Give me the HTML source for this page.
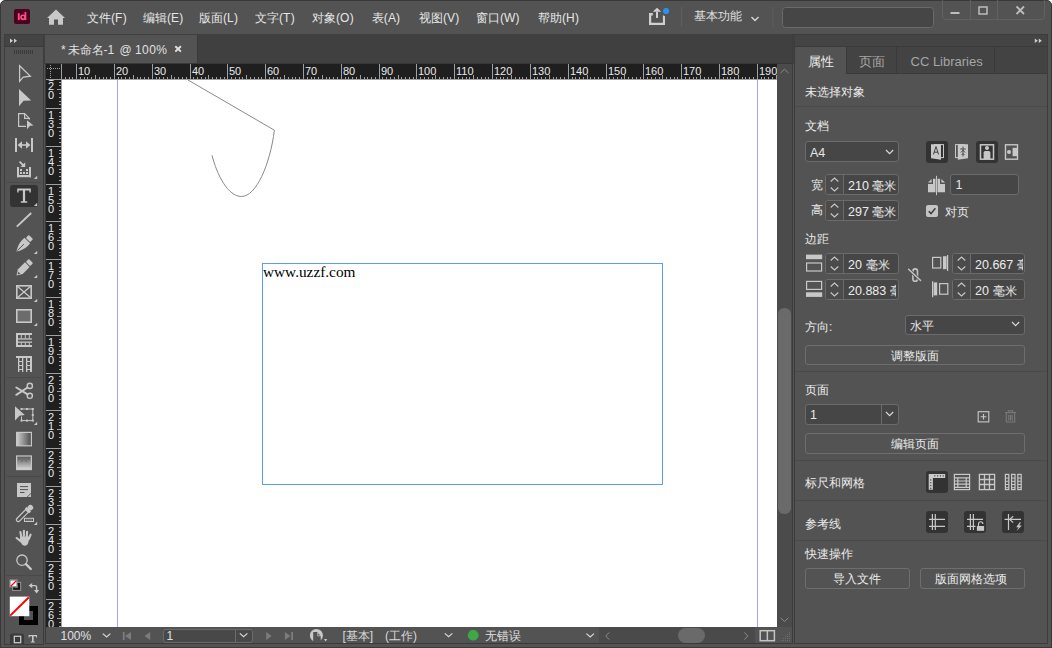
<!DOCTYPE html>
<html><head><meta charset="utf-8">
<style>
*{margin:0;padding:0;box-sizing:border-box}
html,body{width:1052px;height:648px;overflow:hidden;background:#ffffff}
body{position:relative;font-family:"Liberation Sans",sans-serif;font-size:12px;color:#dcdcdc}
.a{position:absolute}
.t{position:absolute;white-space:nowrap;line-height:1}
.rn{font-size:11px;color:#e8e8e8}
.rv{font-size:11px;color:#e8e8e8}
.fld{position:absolute;background:#464646;border:1px solid #6b6b6b;border-radius:3px}
.btn{position:absolute;border:1px solid #6e6e6e;border-radius:3px;text-align:center;line-height:18px;color:#ececec}
.sep{position:absolute;height:1px;background:#4a4a4a}
svg{overflow:visible}
</style></head>
<body>
<div class="a" style="left:0;top:0;width:1052px;height:648px;background:#535353;border:1px solid #383838;border-radius:5px 5px 0 0"></div>

<div class="a" style="left:14px;top:9px;width:16px;height:15px;background:#49021f;border-radius:2px"></div>
<svg class="a" style="left:0;top:0" width="40" height="30"><rect x="17.8" y="13.2" width="1.9" height="6.9" fill="#ff4d82"/><rect x="24.5" y="12.1" width="1.8" height="8" fill="#ff4d82"/><circle cx="23" cy="17.3" r="2.05" fill="none" stroke="#ff4d82" stroke-width="1.7"/></svg>
<svg class="a" style="left:0;top:0" width="80" height="34">
<path d="M56 9.6 L65 18 L63 18 L63 24.7 L58 24.7 L58 19.5 L54 19.5 L54 24.7 L49 24.7 L49 18 L47 18 Z" fill="#c8c8c8"/>
</svg>

<div class="t" style="left:86.5px;top:11.5px;font-size:12px;color:#e6e6e6;letter-spacing:0.2px">文件(F)</div>
<div class="t" style="left:142.5px;top:11.5px;font-size:12px;color:#e6e6e6;letter-spacing:0.2px">编辑(E)</div>
<div class="t" style="left:198.5px;top:11.5px;font-size:12px;color:#e6e6e6;letter-spacing:0.2px">版面(L)</div>
<div class="t" style="left:254.5px;top:11.5px;font-size:12px;color:#e6e6e6;letter-spacing:0.2px">文字(T)</div>
<div class="t" style="left:311.5px;top:11.5px;font-size:12px;color:#e6e6e6;letter-spacing:0.2px">对象(O)</div>
<div class="t" style="left:371.5px;top:11.5px;font-size:12px;color:#e6e6e6;letter-spacing:0.2px">表(A)</div>
<div class="t" style="left:418.5px;top:11.5px;font-size:12px;color:#e6e6e6;letter-spacing:0.2px">视图(V)</div>
<div class="t" style="left:475.5px;top:11.5px;font-size:12px;color:#e6e6e6;letter-spacing:0.2px">窗口(W)</div>
<div class="t" style="left:537.5px;top:11.5px;font-size:12px;color:#e6e6e6;letter-spacing:0.2px">帮助(H)</div>
<svg class="a" style="left:0;top:0" width="1052" height="34">
<path d="M649 13 H652.8 V15.4 H651.2 V22.8 H662.9 V15.2 L665 16.2 V25 H649 Z" fill="#d0d0d0"/>
<path d="M656 11.6 V17.9 H658 V11.6 Z M652.8 11.8 L657 7.8 L661.2 11.8 Z" fill="#d0d0d0"/>
<circle cx="666.1" cy="11" r="3.1" fill="#2f8ff0"/>
<rect x="681" y="7" width="1" height="20" fill="#5f5f5f"/>
<rect x="772.5" y="7" width="1" height="20" fill="#5f5f5f"/>
<path d="M751.5 17 L755 20.5 L758.5 17" fill="none" stroke="#d8d8d8" stroke-width="1.3"/>
<rect x="782.5" y="7.5" width="151" height="20" rx="3" fill="#464646" stroke="#6a6a6a"/>
<path d="M942.5 0 V16 Q942.5 19.5 946 19.5 H1041 Q1044.5 19.5 1044.5 16 V0" fill="none" stroke="#626262"/>
<rect x="970" y="0" width="1" height="19" fill="#626262"/>
<rect x="997" y="0" width="1" height="19" fill="#626262"/>
<rect x="950.5" y="12" width="9" height="2" fill="#bdbdbd"/>
<rect x="979" y="7" width="8" height="7" fill="none" stroke="#bdbdbd" stroke-width="1.5"/>
<path d="M1016.5 6.5 L1024 14 M1024 6.5 L1016.5 14" stroke="#bdbdbd" stroke-width="1.8"/>
</svg>
<div class="t" style="left:694px;top:10px;font-size:12px;color:#e0e0e0">基本功能</div>

<div class="a" style="left:4px;top:34px;width:40px;height:611px;background:#535353;border:1px solid #3c3c3c"></div>
<div class="a" style="left:5px;top:35px;width:38px;height:12px;background:#444444;border-bottom:1px solid #3a3a3a"></div>

<svg class="a" style="left:0;top:0" width="46" height="648">
<rect x="14" y="50" width="1" height="4" fill="#3a3a3a"/>
<rect x="16" y="50" width="1" height="4" fill="#3a3a3a"/>
<rect x="18" y="50" width="1" height="4" fill="#3a3a3a"/>
<rect x="20" y="50" width="1" height="4" fill="#3a3a3a"/>
<rect x="22" y="50" width="1" height="4" fill="#3a3a3a"/>
<rect x="24" y="50" width="1" height="4" fill="#3a3a3a"/>
<rect x="26" y="50" width="1" height="4" fill="#3a3a3a"/>
<rect x="28" y="50" width="1" height="4" fill="#3a3a3a"/>
<rect x="30" y="50" width="1" height="4" fill="#3a3a3a"/>
<rect x="32" y="50" width="1" height="4" fill="#3a3a3a"/>
<path d="M10 38.5 L13 40.7 L10 42.9 Z M14 38.5 L17 40.7 L14 42.9 Z" fill="#cfcfcf"/>
<path d="M19.6 65.8 L30.4 76.2 L23.2 77.2 L19.6 81.4 Z" fill="none" stroke="#c8c8c8" stroke-width="1.25" stroke-linejoin="miter"/>
<path d="M19 89 L31.2 100.6 L23.6 100.8 L19 106.3 Z" fill="#c8c8c8"/>
<path d="M26 126.4 H18.6 V113.6 H24.6 L29.4 118.4 V119.5" fill="none" stroke="#c8c8c8" stroke-width="1.2"/>
<path d="M24.6 113.6 V118.4 H29.4" fill="none" stroke="#c8c8c8" stroke-width="1.2"/>
<path d="M27 120.2 L33.5 125.5 L30 125.8 L27 129.3 Z" fill="#c8c8c8"/>
<rect x="15" y="138" width="2" height="14" fill="#c8c8c8"/><rect x="31" y="138" width="2" height="14" fill="#c8c8c8"/>
<path d="M21 145 H27" stroke="#c8c8c8" stroke-width="1.6"/>
<path d="M17.6 145 L22 141.3 V148.7 Z M30.4 145 L26 141.3 V148.7 Z" fill="#c8c8c8"/>
<g fill="#c8c8c8"><rect x="17" y="167" width="2" height="10.2"/><rect x="29" y="167" width="2" height="10.2"/><rect x="17" y="175" width="14" height="2.2"/><rect x="20" y="169" width="2" height="2"/><rect x="26" y="169" width="2" height="2"/><rect x="20" y="172" width="2" height="2"/><rect x="23" y="172" width="2" height="2"/><rect x="26" y="172" width="2" height="2"/></g>
<path d="M19.6 161.6 L23.6 165.6" stroke="#c8c8c8" stroke-width="1.8"/><path d="M20.6 167 H25.2 V162.2 Z" fill="#c8c8c8"/>
<path d="M33.900000000000006 179 L37.2 179 L37.2 175.7 Z" fill="#c8c8c8"/>
<rect x="6" y="182" width="36" height="1" fill="#4a4a4a"/>
<rect x="10" y="185" width="28" height="22" rx="3" fill="#333333"/>
<path d="M17.2 188.6 H30.8 V192.4 H29.4 V190.4 H25.1 V201.2 H27.2 V202.8 H20.8 V201.2 H22.9 V190.4 H18.6 V192.4 H17.2 Z" fill="#c8c8c8"/>
<path d="M33.900000000000006 206 L37.2 206 L37.2 202.7 Z" fill="#c8c8c8"/>
<path d="M16.8 226.6 L31.2 213" stroke="#c8c8c8" stroke-width="1.9"/>
<g transform="translate(23.6 244.4) rotate(45) scale(0.92)"><rect x="-3.3" y="-11.3" width="6.6" height="4.6" rx="1" fill="#c8c8c8"/><path d="M-4.4 -5.7 H4.4 V-1.5 Q4.2 4.5 0 11 Q-4.2 4.5 -4.4 -1.5 Z" fill="#c8c8c8"/><path d="M0 -0.5 V9.5" stroke="#535353" stroke-width="1"/></g>
<path d="M33.900000000000006 254 L37.2 254 L37.2 250.7 Z" fill="#c8c8c8"/>
<g transform="translate(23.6 268.4) rotate(45) scale(0.92)"><rect x="-3.3" y="-11.3" width="6.6" height="4.6" rx="1" fill="#c8c8c8"/><path d="M-3.6 -5.7 H3.6 V5 L0 11 L-3.6 5 Z" fill="#c8c8c8"/><path d="M-1.5 6.5 H1.5 L0 9.2 Z" fill="#535353"/></g>
<path d="M33.900000000000006 278 L37.2 278 L37.2 274.7 Z" fill="#c8c8c8"/>
<rect x="16.8" y="285.8" width="14.4" height="12.4" fill="none" stroke="#c8c8c8" stroke-width="1.6"/>
<path d="M17 286 L31 298 M31 286 L17 298" stroke="#c8c8c8" stroke-width="1.3"/>
<path d="M33.900000000000006 302 L37.2 302 L37.2 298.7 Z" fill="#c8c8c8"/>
<rect x="16.8" y="309.8" width="14.4" height="12.4" fill="#6c6c6c" stroke="#c8c8c8" stroke-width="1.6"/>
<path d="M33.900000000000006 326 L37.2 326 L37.2 322.7 Z" fill="#c8c8c8"/>
<g fill="#c8c8c8"><rect x="16" y="333" width="16" height="2"/><rect x="16" y="333" width="2" height="14"/><rect x="16" y="345" width="16" height="2"/><rect x="18" y="338.3" width="14" height="1.3"/><rect x="18" y="341.5" width="14" height="1.3"/><rect x="20.8" y="335" width="1" height="3.5"/><rect x="24.8" y="335" width="1" height="3.5"/><rect x="28.8" y="335" width="1" height="3.5"/><rect x="20.8" y="342.5" width="1" height="3"/><rect x="24.8" y="342.5" width="1" height="3"/><rect x="28.8" y="342.5" width="1" height="3"/></g>
<g fill="#c8c8c8"><rect x="16" y="356" width="16" height="2"/><rect x="18" y="358" width="1.3" height="14"/><rect x="22" y="358" width="1.3" height="14"/><rect x="26" y="358" width="1.3" height="14"/><rect x="30" y="358" width="2" height="14"/><rect x="18" y="361" width="5" height="1"/><rect x="18" y="365" width="5" height="1"/><rect x="18" y="369" width="5" height="1"/><rect x="26" y="361" width="5" height="1"/><rect x="26" y="365" width="5" height="1"/><rect x="26" y="369" width="5" height="1"/></g>
<rect x="6" y="377" width="36" height="1" fill="#4a4a4a"/>
<circle cx="29.8" cy="385.9" r="2.6" fill="none" stroke="#c8c8c8" stroke-width="1.4"/>
<circle cx="29.8" cy="395.8" r="2.6" fill="none" stroke="#c8c8c8" stroke-width="1.4"/>
<path d="M16.3 387.5 L27.6 394.3 M16.3 394.8 L27.6 387.5" stroke="#c8c8c8" stroke-width="2" stroke-linecap="round"/>
<path d="M15 406.2 L24.8 415 L19.5 415.8 L15 420.4 Z" fill="#c8c8c8"/>
<path d="M21.5 409 H32.8 V420.6 H21.5 V416.5" fill="none" stroke="#c8c8c8" stroke-width="1"/>
<g fill="#c8c8c8"><rect x="20.5" y="408" width="2" height="2"/><rect x="26" y="408" width="2" height="2"/><rect x="31.8" y="408" width="2" height="2"/><rect x="31.8" y="414" width="2" height="2"/><rect x="31.8" y="419.6" width="2" height="2"/><rect x="26" y="419.6" width="2" height="2"/><rect x="20.5" y="419.6" width="2" height="2"/></g>
<path d="M33.900000000000006 425 L37.2 425 L37.2 421.7 Z" fill="#c8c8c8"/>
<defs><linearGradient id="gs" x1="0" x2="1" y1="0" y2="0"><stop offset="0" stop-color="#d0d0d0"/><stop offset="1" stop-color="#4a4a4a"/></linearGradient><linearGradient id="gf" x1="0" x2="0" y1="0" y2="1"><stop offset="0" stop-color="#555"/><stop offset="1" stop-color="#d8d8d8"/></linearGradient></defs>
<rect x="16.6" y="432.4" width="14.8" height="13.4" fill="url(#gs)" stroke="#c8c8c8" stroke-width="1.2"/>
<rect x="16.6" y="456" width="14.8" height="13.6" fill="url(#gf)" stroke="#c8c8c8" stroke-width="1.2"/>
<g fill="#6a6a6a" opacity="0.6"><rect x="19" y="458" width="2" height="2"/><rect x="23" y="458" width="2" height="2"/><rect x="27" y="458" width="2" height="2"/><rect x="21" y="460" width="2" height="2"/><rect x="25" y="460" width="2" height="2"/></g>
<rect x="6" y="476" width="36" height="1" fill="#4a4a4a"/>
<path d="M17 483 H31 V493.2 L27.2 497 H17 Z" fill="#c8c8c8"/>
<path d="M20 486.6 H28 M20 489.6 H28 M20 492.5 H24.5" stroke="#535353" stroke-width="1"/>
<path d="M26.6 497.4 L31.4 492.6 V497.4 Z" fill="#535353"/><path d="M27.8 497 L31 493.8 V497 Z" fill="#c8c8c8"/>
<g transform="translate(24 514) rotate(45)"><circle cx="0" cy="-9" r="2.8" fill="#c8c8c8"/><rect x="-3.2" y="-6.8" width="6.4" height="2.6" rx="0.5" fill="#c8c8c8"/><path d="M-1.9 -4.2 H1.9 V7.5 Q1.9 10 0 10 Q-1.9 10 -1.9 7.5 Z" fill="none" stroke="#c8c8c8" stroke-width="1.2"/></g>
<rect x="24.5" y="518.3" width="9" height="3.2" fill="none" stroke="#c8c8c8" stroke-width="1"/>
<g fill="#8a8a8a"><rect x="26" y="519.3" width="1.4" height="1.4"/><rect x="28.3" y="519.3" width="1.4" height="1.4"/><rect x="30.6" y="519.3" width="1.4" height="1.4"/></g>
<path d="M33.900000000000006 525 L37.2 525 L37.2 521.7 Z" fill="#c8c8c8"/>
<g stroke="#c8c8c8" stroke-width="2.1" stroke-linecap="round" fill="none"><path d="M16.6 538 L21 541.5"/><path d="M20.4 532 L21.3 537"/><path d="M23.9 530.7 V536"/><path d="M27.1 531.7 L26.8 537"/><path d="M30.6 534.6 L28.8 539"/></g>
<path d="M20.2 536.5 H29.6 L28.6 541.5 Q27.8 545.8 24.6 545.8 Q22.2 545.8 21 542.8 L19.6 540 Z" fill="#c8c8c8"/>
<circle cx="22" cy="560.2" r="5.2" fill="none" stroke="#c8c8c8" stroke-width="1.3"/>
<path d="M26 564.2 L30.8 569" stroke="#c8c8c8" stroke-width="2.4" stroke-linecap="round"/>
<rect x="6" y="575" width="36" height="1" fill="#4a4a4a"/>
<rect x="12.6" y="582.4" width="8" height="8" fill="#111" stroke="#8a8a8a" stroke-width="1.2"/>
<path d="M15 587.6 H17.6 V585" fill="none" stroke="#777" stroke-width="0.9"/>
<rect x="10" y="580" width="7" height="6.8" fill="#fff" stroke="#8a8a8a" stroke-width="1.3"/>
<path d="M10.8 586.2 L16.4 580.6" stroke="#f00" stroke-width="1.3"/>
<path d="M31 585.6 H35.2 Q36.6 585.6 36.6 587 V590.6" fill="none" stroke="#c8c8c8" stroke-width="1.4"/>
<path d="M32.2 583 L28.6 585.6 L32.2 588.2 Z M34 590 L36.6 593.6 L39.2 590 Z" fill="#c8c8c8"/>
<path d="M19 606 H38 V625 H19 Z M24 611 V620 H33 V611 Z" fill="#000" fill-rule="evenodd"/>
<rect x="9.8" y="596.6" width="19.5" height="19.6" fill="#ffffff"/>
<path d="M10.2 615.6 L28.9 597.2" stroke="#ff0000" stroke-width="2"/>
<path d="M10 644 V636 Q10 633.6 12.5 633.6 H21.5 Q24 633.6 24 636 V644 Z" fill="#3a3a3a"/>
<rect x="14.3" y="636.3" width="6.4" height="6.4" fill="none" stroke="#c8c8c8" stroke-width="1.3"/>
<path d="M28.6 635 H37 V637.4 H36.2 L35.8 636.3 H33.6 V641.5 H34.8 V642.6 H30.8 V641.5 H32 V636.3 H29.8 L29.4 637.4 H28.6 Z" fill="#c8c8c8"/>
</svg>
<div class="a" style="left:44px;top:34px;width:750px;height:30px;background:#404040"></div>
<div class="a" style="left:45px;top:35px;width:152px;height:29px;background:#535353"></div><div class="a" style="left:197px;top:35px;width:1px;height:29px;background:#3a3a3a"></div><div class="a" style="left:45px;top:63px;width:747px;height:1px;background:#383838"></div>
<div class="t" style="left:61px;top:43.5px;font-size:12px;color:#e0e0e0">*</div><div class="t" style="left:67.5px;top:43.5px;font-size:12px;color:#e0e0e0">未命名-1</div><div class="t" style="left:119.5px;top:43.5px;font-size:12px;color:#e0e0e0">@</div><div class="t" style="left:135px;top:43.5px;font-size:12px;color:#e0e0e0;letter-spacing:0.4px">100%</div>
<svg class="a" style="left:0;top:0" width="200" height="64"><path d="M175.3 46.2 L180.9 51.6 M180.9 46.2 L175.3 51.6" stroke="#e0e0e0" stroke-width="1.9"/></svg>

<div class="a" style="left:46px;top:64px;width:731px;height:16px;overflow:hidden;background:#1f1f1f">
<svg class="a" style="left:0;top:0" width="731" height="16" shape-rendering="crispEdges">
<rect x="16" y="15" width="715" height="1" fill="#a0a0a0"/>
<rect x="19" y="13" width="1" height="2" fill="#a0a0a0"/>
<rect x="23" y="13" width="1" height="2" fill="#a0a0a0"/>
<rect x="26" y="13" width="1" height="2" fill="#a0a0a0"/>
<rect x="30" y="0" width="1" height="15" fill="#a0a0a0"/>
<rect x="34" y="13" width="1" height="2" fill="#a0a0a0"/>
<rect x="38" y="13" width="1" height="2" fill="#a0a0a0"/>
<rect x="41" y="13" width="1" height="2" fill="#a0a0a0"/>
<rect x="45" y="13" width="1" height="2" fill="#a0a0a0"/>
<rect x="49" y="11" width="1" height="4" fill="#a0a0a0"/>
<rect x="53" y="13" width="1" height="2" fill="#a0a0a0"/>
<rect x="57" y="13" width="1" height="2" fill="#a0a0a0"/>
<rect x="60" y="13" width="1" height="2" fill="#a0a0a0"/>
<rect x="64" y="13" width="1" height="2" fill="#a0a0a0"/>
<rect x="68" y="0" width="1" height="15" fill="#a0a0a0"/>
<rect x="72" y="13" width="1" height="2" fill="#a0a0a0"/>
<rect x="75" y="13" width="1" height="2" fill="#a0a0a0"/>
<rect x="79" y="13" width="1" height="2" fill="#a0a0a0"/>
<rect x="83" y="13" width="1" height="2" fill="#a0a0a0"/>
<rect x="87" y="11" width="1" height="4" fill="#a0a0a0"/>
<rect x="91" y="13" width="1" height="2" fill="#a0a0a0"/>
<rect x="94" y="13" width="1" height="2" fill="#a0a0a0"/>
<rect x="98" y="13" width="1" height="2" fill="#a0a0a0"/>
<rect x="102" y="13" width="1" height="2" fill="#a0a0a0"/>
<rect x="106" y="0" width="1" height="15" fill="#a0a0a0"/>
<rect x="110" y="13" width="1" height="2" fill="#a0a0a0"/>
<rect x="113" y="13" width="1" height="2" fill="#a0a0a0"/>
<rect x="117" y="13" width="1" height="2" fill="#a0a0a0"/>
<rect x="121" y="13" width="1" height="2" fill="#a0a0a0"/>
<rect x="125" y="11" width="1" height="4" fill="#a0a0a0"/>
<rect x="128" y="13" width="1" height="2" fill="#a0a0a0"/>
<rect x="132" y="13" width="1" height="2" fill="#a0a0a0"/>
<rect x="136" y="13" width="1" height="2" fill="#a0a0a0"/>
<rect x="140" y="13" width="1" height="2" fill="#a0a0a0"/>
<rect x="144" y="0" width="1" height="15" fill="#a0a0a0"/>
<rect x="147" y="13" width="1" height="2" fill="#a0a0a0"/>
<rect x="151" y="13" width="1" height="2" fill="#a0a0a0"/>
<rect x="155" y="13" width="1" height="2" fill="#a0a0a0"/>
<rect x="159" y="13" width="1" height="2" fill="#a0a0a0"/>
<rect x="162" y="11" width="1" height="4" fill="#a0a0a0"/>
<rect x="166" y="13" width="1" height="2" fill="#a0a0a0"/>
<rect x="170" y="13" width="1" height="2" fill="#a0a0a0"/>
<rect x="174" y="13" width="1" height="2" fill="#a0a0a0"/>
<rect x="178" y="13" width="1" height="2" fill="#a0a0a0"/>
<rect x="181" y="0" width="1" height="15" fill="#a0a0a0"/>
<rect x="185" y="13" width="1" height="2" fill="#a0a0a0"/>
<rect x="189" y="13" width="1" height="2" fill="#a0a0a0"/>
<rect x="193" y="13" width="1" height="2" fill="#a0a0a0"/>
<rect x="196" y="13" width="1" height="2" fill="#a0a0a0"/>
<rect x="200" y="11" width="1" height="4" fill="#a0a0a0"/>
<rect x="204" y="13" width="1" height="2" fill="#a0a0a0"/>
<rect x="208" y="13" width="1" height="2" fill="#a0a0a0"/>
<rect x="212" y="13" width="1" height="2" fill="#a0a0a0"/>
<rect x="215" y="13" width="1" height="2" fill="#a0a0a0"/>
<rect x="219" y="0" width="1" height="15" fill="#a0a0a0"/>
<rect x="223" y="13" width="1" height="2" fill="#a0a0a0"/>
<rect x="227" y="13" width="1" height="2" fill="#a0a0a0"/>
<rect x="231" y="13" width="1" height="2" fill="#a0a0a0"/>
<rect x="234" y="13" width="1" height="2" fill="#a0a0a0"/>
<rect x="238" y="11" width="1" height="4" fill="#a0a0a0"/>
<rect x="242" y="13" width="1" height="2" fill="#a0a0a0"/>
<rect x="246" y="13" width="1" height="2" fill="#a0a0a0"/>
<rect x="249" y="13" width="1" height="2" fill="#a0a0a0"/>
<rect x="253" y="13" width="1" height="2" fill="#a0a0a0"/>
<rect x="257" y="0" width="1" height="15" fill="#a0a0a0"/>
<rect x="261" y="13" width="1" height="2" fill="#a0a0a0"/>
<rect x="265" y="13" width="1" height="2" fill="#a0a0a0"/>
<rect x="268" y="13" width="1" height="2" fill="#a0a0a0"/>
<rect x="272" y="13" width="1" height="2" fill="#a0a0a0"/>
<rect x="276" y="11" width="1" height="4" fill="#a0a0a0"/>
<rect x="280" y="13" width="1" height="2" fill="#a0a0a0"/>
<rect x="283" y="13" width="1" height="2" fill="#a0a0a0"/>
<rect x="287" y="13" width="1" height="2" fill="#a0a0a0"/>
<rect x="291" y="13" width="1" height="2" fill="#a0a0a0"/>
<rect x="295" y="0" width="1" height="15" fill="#a0a0a0"/>
<rect x="299" y="13" width="1" height="2" fill="#a0a0a0"/>
<rect x="302" y="13" width="1" height="2" fill="#a0a0a0"/>
<rect x="306" y="13" width="1" height="2" fill="#a0a0a0"/>
<rect x="310" y="13" width="1" height="2" fill="#a0a0a0"/>
<rect x="314" y="11" width="1" height="4" fill="#a0a0a0"/>
<rect x="318" y="13" width="1" height="2" fill="#a0a0a0"/>
<rect x="321" y="13" width="1" height="2" fill="#a0a0a0"/>
<rect x="325" y="13" width="1" height="2" fill="#a0a0a0"/>
<rect x="329" y="13" width="1" height="2" fill="#a0a0a0"/>
<rect x="333" y="0" width="1" height="15" fill="#a0a0a0"/>
<rect x="336" y="13" width="1" height="2" fill="#a0a0a0"/>
<rect x="340" y="13" width="1" height="2" fill="#a0a0a0"/>
<rect x="344" y="13" width="1" height="2" fill="#a0a0a0"/>
<rect x="348" y="13" width="1" height="2" fill="#a0a0a0"/>
<rect x="352" y="11" width="1" height="4" fill="#a0a0a0"/>
<rect x="355" y="13" width="1" height="2" fill="#a0a0a0"/>
<rect x="359" y="13" width="1" height="2" fill="#a0a0a0"/>
<rect x="363" y="13" width="1" height="2" fill="#a0a0a0"/>
<rect x="367" y="13" width="1" height="2" fill="#a0a0a0"/>
<rect x="370" y="0" width="1" height="15" fill="#a0a0a0"/>
<rect x="374" y="13" width="1" height="2" fill="#a0a0a0"/>
<rect x="378" y="13" width="1" height="2" fill="#a0a0a0"/>
<rect x="382" y="13" width="1" height="2" fill="#a0a0a0"/>
<rect x="386" y="13" width="1" height="2" fill="#a0a0a0"/>
<rect x="389" y="11" width="1" height="4" fill="#a0a0a0"/>
<rect x="393" y="13" width="1" height="2" fill="#a0a0a0"/>
<rect x="397" y="13" width="1" height="2" fill="#a0a0a0"/>
<rect x="401" y="13" width="1" height="2" fill="#a0a0a0"/>
<rect x="404" y="13" width="1" height="2" fill="#a0a0a0"/>
<rect x="408" y="0" width="1" height="15" fill="#a0a0a0"/>
<rect x="412" y="13" width="1" height="2" fill="#a0a0a0"/>
<rect x="416" y="13" width="1" height="2" fill="#a0a0a0"/>
<rect x="420" y="13" width="1" height="2" fill="#a0a0a0"/>
<rect x="423" y="13" width="1" height="2" fill="#a0a0a0"/>
<rect x="427" y="11" width="1" height="4" fill="#a0a0a0"/>
<rect x="431" y="13" width="1" height="2" fill="#a0a0a0"/>
<rect x="435" y="13" width="1" height="2" fill="#a0a0a0"/>
<rect x="439" y="13" width="1" height="2" fill="#a0a0a0"/>
<rect x="442" y="13" width="1" height="2" fill="#a0a0a0"/>
<rect x="446" y="0" width="1" height="15" fill="#a0a0a0"/>
<rect x="450" y="13" width="1" height="2" fill="#a0a0a0"/>
<rect x="454" y="13" width="1" height="2" fill="#a0a0a0"/>
<rect x="457" y="13" width="1" height="2" fill="#a0a0a0"/>
<rect x="461" y="13" width="1" height="2" fill="#a0a0a0"/>
<rect x="465" y="11" width="1" height="4" fill="#a0a0a0"/>
<rect x="469" y="13" width="1" height="2" fill="#a0a0a0"/>
<rect x="473" y="13" width="1" height="2" fill="#a0a0a0"/>
<rect x="476" y="13" width="1" height="2" fill="#a0a0a0"/>
<rect x="480" y="13" width="1" height="2" fill="#a0a0a0"/>
<rect x="484" y="0" width="1" height="15" fill="#a0a0a0"/>
<rect x="488" y="13" width="1" height="2" fill="#a0a0a0"/>
<rect x="491" y="13" width="1" height="2" fill="#a0a0a0"/>
<rect x="495" y="13" width="1" height="2" fill="#a0a0a0"/>
<rect x="499" y="13" width="1" height="2" fill="#a0a0a0"/>
<rect x="503" y="11" width="1" height="4" fill="#a0a0a0"/>
<rect x="507" y="13" width="1" height="2" fill="#a0a0a0"/>
<rect x="510" y="13" width="1" height="2" fill="#a0a0a0"/>
<rect x="514" y="13" width="1" height="2" fill="#a0a0a0"/>
<rect x="518" y="13" width="1" height="2" fill="#a0a0a0"/>
<rect x="522" y="0" width="1" height="15" fill="#a0a0a0"/>
<rect x="526" y="13" width="1" height="2" fill="#a0a0a0"/>
<rect x="529" y="13" width="1" height="2" fill="#a0a0a0"/>
<rect x="533" y="13" width="1" height="2" fill="#a0a0a0"/>
<rect x="537" y="13" width="1" height="2" fill="#a0a0a0"/>
<rect x="541" y="11" width="1" height="4" fill="#a0a0a0"/>
<rect x="544" y="13" width="1" height="2" fill="#a0a0a0"/>
<rect x="548" y="13" width="1" height="2" fill="#a0a0a0"/>
<rect x="552" y="13" width="1" height="2" fill="#a0a0a0"/>
<rect x="556" y="13" width="1" height="2" fill="#a0a0a0"/>
<rect x="560" y="0" width="1" height="15" fill="#a0a0a0"/>
<rect x="563" y="13" width="1" height="2" fill="#a0a0a0"/>
<rect x="567" y="13" width="1" height="2" fill="#a0a0a0"/>
<rect x="571" y="13" width="1" height="2" fill="#a0a0a0"/>
<rect x="575" y="13" width="1" height="2" fill="#a0a0a0"/>
<rect x="578" y="11" width="1" height="4" fill="#a0a0a0"/>
<rect x="582" y="13" width="1" height="2" fill="#a0a0a0"/>
<rect x="586" y="13" width="1" height="2" fill="#a0a0a0"/>
<rect x="590" y="13" width="1" height="2" fill="#a0a0a0"/>
<rect x="594" y="13" width="1" height="2" fill="#a0a0a0"/>
<rect x="597" y="0" width="1" height="15" fill="#a0a0a0"/>
<rect x="601" y="13" width="1" height="2" fill="#a0a0a0"/>
<rect x="605" y="13" width="1" height="2" fill="#a0a0a0"/>
<rect x="609" y="13" width="1" height="2" fill="#a0a0a0"/>
<rect x="613" y="13" width="1" height="2" fill="#a0a0a0"/>
<rect x="616" y="11" width="1" height="4" fill="#a0a0a0"/>
<rect x="620" y="13" width="1" height="2" fill="#a0a0a0"/>
<rect x="624" y="13" width="1" height="2" fill="#a0a0a0"/>
<rect x="628" y="13" width="1" height="2" fill="#a0a0a0"/>
<rect x="631" y="13" width="1" height="2" fill="#a0a0a0"/>
<rect x="635" y="0" width="1" height="15" fill="#a0a0a0"/>
<rect x="639" y="13" width="1" height="2" fill="#a0a0a0"/>
<rect x="643" y="13" width="1" height="2" fill="#a0a0a0"/>
<rect x="647" y="13" width="1" height="2" fill="#a0a0a0"/>
<rect x="650" y="13" width="1" height="2" fill="#a0a0a0"/>
<rect x="654" y="11" width="1" height="4" fill="#a0a0a0"/>
<rect x="658" y="13" width="1" height="2" fill="#a0a0a0"/>
<rect x="662" y="13" width="1" height="2" fill="#a0a0a0"/>
<rect x="665" y="13" width="1" height="2" fill="#a0a0a0"/>
<rect x="669" y="13" width="1" height="2" fill="#a0a0a0"/>
<rect x="673" y="0" width="1" height="15" fill="#a0a0a0"/>
<rect x="677" y="13" width="1" height="2" fill="#a0a0a0"/>
<rect x="681" y="13" width="1" height="2" fill="#a0a0a0"/>
<rect x="684" y="13" width="1" height="2" fill="#a0a0a0"/>
<rect x="688" y="13" width="1" height="2" fill="#a0a0a0"/>
<rect x="692" y="11" width="1" height="4" fill="#a0a0a0"/>
<rect x="696" y="13" width="1" height="2" fill="#a0a0a0"/>
<rect x="699" y="13" width="1" height="2" fill="#a0a0a0"/>
<rect x="703" y="13" width="1" height="2" fill="#a0a0a0"/>
<rect x="707" y="13" width="1" height="2" fill="#a0a0a0"/>
<rect x="711" y="0" width="1" height="15" fill="#a0a0a0"/>
<rect x="715" y="13" width="1" height="2" fill="#a0a0a0"/>
<rect x="718" y="13" width="1" height="2" fill="#a0a0a0"/>
<rect x="722" y="13" width="1" height="2" fill="#a0a0a0"/>
<rect x="726" y="13" width="1" height="2" fill="#a0a0a0"/>
<rect x="730" y="11" width="1" height="4" fill="#a0a0a0"/>
</svg>
<div class="t rn" style="left:32px;top:2px">10</div>
<div class="t rn" style="left:70px;top:2px">20</div>
<div class="t rn" style="left:108px;top:2px">30</div>
<div class="t rn" style="left:146px;top:2px">40</div>
<div class="t rn" style="left:183px;top:2px">50</div>
<div class="t rn" style="left:221px;top:2px">60</div>
<div class="t rn" style="left:259px;top:2px">70</div>
<div class="t rn" style="left:297px;top:2px">80</div>
<div class="t rn" style="left:335px;top:2px">90</div>
<div class="t rn" style="left:372px;top:2px">100</div>
<div class="t rn" style="left:410px;top:2px">110</div>
<div class="t rn" style="left:448px;top:2px">120</div>
<div class="t rn" style="left:486px;top:2px">130</div>
<div class="t rn" style="left:524px;top:2px">140</div>
<div class="t rn" style="left:562px;top:2px">150</div>
<div class="t rn" style="left:599px;top:2px">160</div>
<div class="t rn" style="left:637px;top:2px">170</div>
<div class="t rn" style="left:675px;top:2px">180</div>
<div class="t rn" style="left:713px;top:2px">190</div>
</div>
<div class="a" style="left:46px;top:80px;width:16px;height:547px;overflow:hidden;background:#1f1f1f">
<svg class="a" style="left:0;top:0" width="16" height="547" shape-rendering="crispEdges">
<rect x="15" y="0" width="1" height="547" fill="#a0a0a0"/>
<rect x="13" y="2" width="2" height="1" fill="#a0a0a0"/>
<rect x="13" y="5" width="2" height="1" fill="#a0a0a0"/>
<rect x="11" y="9" width="4" height="1" fill="#a0a0a0"/>
<rect x="13" y="13" width="2" height="1" fill="#a0a0a0"/>
<rect x="13" y="17" width="2" height="1" fill="#a0a0a0"/>
<rect x="13" y="21" width="2" height="1" fill="#a0a0a0"/>
<rect x="13" y="24" width="2" height="1" fill="#a0a0a0"/>
<rect x="0" y="28" width="15" height="1" fill="#a0a0a0"/>
<rect x="13" y="32" width="2" height="1" fill="#a0a0a0"/>
<rect x="13" y="36" width="2" height="1" fill="#a0a0a0"/>
<rect x="13" y="39" width="2" height="1" fill="#a0a0a0"/>
<rect x="13" y="43" width="2" height="1" fill="#a0a0a0"/>
<rect x="11" y="47" width="4" height="1" fill="#a0a0a0"/>
<rect x="13" y="51" width="2" height="1" fill="#a0a0a0"/>
<rect x="13" y="55" width="2" height="1" fill="#a0a0a0"/>
<rect x="13" y="58" width="2" height="1" fill="#a0a0a0"/>
<rect x="13" y="62" width="2" height="1" fill="#a0a0a0"/>
<rect x="0" y="66" width="15" height="1" fill="#a0a0a0"/>
<rect x="13" y="70" width="2" height="1" fill="#a0a0a0"/>
<rect x="13" y="73" width="2" height="1" fill="#a0a0a0"/>
<rect x="13" y="77" width="2" height="1" fill="#a0a0a0"/>
<rect x="13" y="81" width="2" height="1" fill="#a0a0a0"/>
<rect x="11" y="85" width="4" height="1" fill="#a0a0a0"/>
<rect x="13" y="89" width="2" height="1" fill="#a0a0a0"/>
<rect x="13" y="92" width="2" height="1" fill="#a0a0a0"/>
<rect x="13" y="96" width="2" height="1" fill="#a0a0a0"/>
<rect x="13" y="100" width="2" height="1" fill="#a0a0a0"/>
<rect x="0" y="104" width="15" height="1" fill="#a0a0a0"/>
<rect x="13" y="107" width="2" height="1" fill="#a0a0a0"/>
<rect x="13" y="111" width="2" height="1" fill="#a0a0a0"/>
<rect x="13" y="115" width="2" height="1" fill="#a0a0a0"/>
<rect x="13" y="119" width="2" height="1" fill="#a0a0a0"/>
<rect x="11" y="123" width="4" height="1" fill="#a0a0a0"/>
<rect x="13" y="126" width="2" height="1" fill="#a0a0a0"/>
<rect x="13" y="130" width="2" height="1" fill="#a0a0a0"/>
<rect x="13" y="134" width="2" height="1" fill="#a0a0a0"/>
<rect x="13" y="138" width="2" height="1" fill="#a0a0a0"/>
<rect x="0" y="141" width="15" height="1" fill="#a0a0a0"/>
<rect x="13" y="145" width="2" height="1" fill="#a0a0a0"/>
<rect x="13" y="149" width="2" height="1" fill="#a0a0a0"/>
<rect x="13" y="153" width="2" height="1" fill="#a0a0a0"/>
<rect x="13" y="157" width="2" height="1" fill="#a0a0a0"/>
<rect x="11" y="160" width="4" height="1" fill="#a0a0a0"/>
<rect x="13" y="164" width="2" height="1" fill="#a0a0a0"/>
<rect x="13" y="168" width="2" height="1" fill="#a0a0a0"/>
<rect x="13" y="172" width="2" height="1" fill="#a0a0a0"/>
<rect x="13" y="175" width="2" height="1" fill="#a0a0a0"/>
<rect x="0" y="179" width="15" height="1" fill="#a0a0a0"/>
<rect x="13" y="183" width="2" height="1" fill="#a0a0a0"/>
<rect x="13" y="187" width="2" height="1" fill="#a0a0a0"/>
<rect x="13" y="191" width="2" height="1" fill="#a0a0a0"/>
<rect x="13" y="194" width="2" height="1" fill="#a0a0a0"/>
<rect x="11" y="198" width="4" height="1" fill="#a0a0a0"/>
<rect x="13" y="202" width="2" height="1" fill="#a0a0a0"/>
<rect x="13" y="206" width="2" height="1" fill="#a0a0a0"/>
<rect x="13" y="209" width="2" height="1" fill="#a0a0a0"/>
<rect x="13" y="213" width="2" height="1" fill="#a0a0a0"/>
<rect x="0" y="217" width="15" height="1" fill="#a0a0a0"/>
<rect x="13" y="221" width="2" height="1" fill="#a0a0a0"/>
<rect x="13" y="225" width="2" height="1" fill="#a0a0a0"/>
<rect x="13" y="228" width="2" height="1" fill="#a0a0a0"/>
<rect x="13" y="232" width="2" height="1" fill="#a0a0a0"/>
<rect x="11" y="236" width="4" height="1" fill="#a0a0a0"/>
<rect x="13" y="240" width="2" height="1" fill="#a0a0a0"/>
<rect x="13" y="243" width="2" height="1" fill="#a0a0a0"/>
<rect x="13" y="247" width="2" height="1" fill="#a0a0a0"/>
<rect x="13" y="251" width="2" height="1" fill="#a0a0a0"/>
<rect x="0" y="255" width="15" height="1" fill="#a0a0a0"/>
<rect x="13" y="259" width="2" height="1" fill="#a0a0a0"/>
<rect x="13" y="262" width="2" height="1" fill="#a0a0a0"/>
<rect x="13" y="266" width="2" height="1" fill="#a0a0a0"/>
<rect x="13" y="270" width="2" height="1" fill="#a0a0a0"/>
<rect x="11" y="274" width="4" height="1" fill="#a0a0a0"/>
<rect x="13" y="277" width="2" height="1" fill="#a0a0a0"/>
<rect x="13" y="281" width="2" height="1" fill="#a0a0a0"/>
<rect x="13" y="285" width="2" height="1" fill="#a0a0a0"/>
<rect x="13" y="289" width="2" height="1" fill="#a0a0a0"/>
<rect x="0" y="293" width="15" height="1" fill="#a0a0a0"/>
<rect x="13" y="296" width="2" height="1" fill="#a0a0a0"/>
<rect x="13" y="300" width="2" height="1" fill="#a0a0a0"/>
<rect x="13" y="304" width="2" height="1" fill="#a0a0a0"/>
<rect x="13" y="308" width="2" height="1" fill="#a0a0a0"/>
<rect x="11" y="311" width="4" height="1" fill="#a0a0a0"/>
<rect x="13" y="315" width="2" height="1" fill="#a0a0a0"/>
<rect x="13" y="319" width="2" height="1" fill="#a0a0a0"/>
<rect x="13" y="323" width="2" height="1" fill="#a0a0a0"/>
<rect x="13" y="327" width="2" height="1" fill="#a0a0a0"/>
<rect x="0" y="330" width="15" height="1" fill="#a0a0a0"/>
<rect x="13" y="334" width="2" height="1" fill="#a0a0a0"/>
<rect x="13" y="338" width="2" height="1" fill="#a0a0a0"/>
<rect x="13" y="342" width="2" height="1" fill="#a0a0a0"/>
<rect x="13" y="345" width="2" height="1" fill="#a0a0a0"/>
<rect x="11" y="349" width="4" height="1" fill="#a0a0a0"/>
<rect x="13" y="353" width="2" height="1" fill="#a0a0a0"/>
<rect x="13" y="357" width="2" height="1" fill="#a0a0a0"/>
<rect x="13" y="361" width="2" height="1" fill="#a0a0a0"/>
<rect x="13" y="364" width="2" height="1" fill="#a0a0a0"/>
<rect x="0" y="368" width="15" height="1" fill="#a0a0a0"/>
<rect x="13" y="372" width="2" height="1" fill="#a0a0a0"/>
<rect x="13" y="376" width="2" height="1" fill="#a0a0a0"/>
<rect x="13" y="379" width="2" height="1" fill="#a0a0a0"/>
<rect x="13" y="383" width="2" height="1" fill="#a0a0a0"/>
<rect x="11" y="387" width="4" height="1" fill="#a0a0a0"/>
<rect x="13" y="391" width="2" height="1" fill="#a0a0a0"/>
<rect x="13" y="395" width="2" height="1" fill="#a0a0a0"/>
<rect x="13" y="398" width="2" height="1" fill="#a0a0a0"/>
<rect x="13" y="402" width="2" height="1" fill="#a0a0a0"/>
<rect x="0" y="406" width="15" height="1" fill="#a0a0a0"/>
<rect x="13" y="410" width="2" height="1" fill="#a0a0a0"/>
<rect x="13" y="413" width="2" height="1" fill="#a0a0a0"/>
<rect x="13" y="417" width="2" height="1" fill="#a0a0a0"/>
<rect x="13" y="421" width="2" height="1" fill="#a0a0a0"/>
<rect x="11" y="425" width="4" height="1" fill="#a0a0a0"/>
<rect x="13" y="429" width="2" height="1" fill="#a0a0a0"/>
<rect x="13" y="432" width="2" height="1" fill="#a0a0a0"/>
<rect x="13" y="436" width="2" height="1" fill="#a0a0a0"/>
<rect x="13" y="440" width="2" height="1" fill="#a0a0a0"/>
<rect x="0" y="444" width="15" height="1" fill="#a0a0a0"/>
<rect x="13" y="447" width="2" height="1" fill="#a0a0a0"/>
<rect x="13" y="451" width="2" height="1" fill="#a0a0a0"/>
<rect x="13" y="455" width="2" height="1" fill="#a0a0a0"/>
<rect x="13" y="459" width="2" height="1" fill="#a0a0a0"/>
<rect x="11" y="463" width="4" height="1" fill="#a0a0a0"/>
<rect x="13" y="466" width="2" height="1" fill="#a0a0a0"/>
<rect x="13" y="470" width="2" height="1" fill="#a0a0a0"/>
<rect x="13" y="474" width="2" height="1" fill="#a0a0a0"/>
<rect x="13" y="478" width="2" height="1" fill="#a0a0a0"/>
<rect x="0" y="481" width="15" height="1" fill="#a0a0a0"/>
<rect x="13" y="485" width="2" height="1" fill="#a0a0a0"/>
<rect x="13" y="489" width="2" height="1" fill="#a0a0a0"/>
<rect x="13" y="493" width="2" height="1" fill="#a0a0a0"/>
<rect x="13" y="497" width="2" height="1" fill="#a0a0a0"/>
<rect x="11" y="500" width="4" height="1" fill="#a0a0a0"/>
<rect x="13" y="504" width="2" height="1" fill="#a0a0a0"/>
<rect x="13" y="508" width="2" height="1" fill="#a0a0a0"/>
<rect x="13" y="512" width="2" height="1" fill="#a0a0a0"/>
<rect x="13" y="515" width="2" height="1" fill="#a0a0a0"/>
<rect x="0" y="519" width="15" height="1" fill="#a0a0a0"/>
<rect x="13" y="523" width="2" height="1" fill="#a0a0a0"/>
<rect x="13" y="527" width="2" height="1" fill="#a0a0a0"/>
<rect x="13" y="531" width="2" height="1" fill="#a0a0a0"/>
<rect x="13" y="534" width="2" height="1" fill="#a0a0a0"/>
<rect x="11" y="538" width="4" height="1" fill="#a0a0a0"/>
<rect x="13" y="542" width="2" height="1" fill="#a0a0a0"/>
<rect x="13" y="546" width="2" height="1" fill="#a0a0a0"/>
</svg>
<div class="t rv" style="left:2px;top:-8.4px">1</div>
<div class="t rv" style="left:2px;top:0.9px">2</div>
<div class="t rv" style="left:2px;top:10.2px">0</div>
<div class="t rv" style="left:2px;top:29.6px">1</div>
<div class="t rv" style="left:2px;top:38.9px">3</div>
<div class="t rv" style="left:2px;top:48.2px">0</div>
<div class="t rv" style="left:2px;top:67.6px">1</div>
<div class="t rv" style="left:2px;top:76.9px">4</div>
<div class="t rv" style="left:2px;top:86.2px">0</div>
<div class="t rv" style="left:2px;top:105.6px">1</div>
<div class="t rv" style="left:2px;top:114.9px">5</div>
<div class="t rv" style="left:2px;top:124.2px">0</div>
<div class="t rv" style="left:2px;top:142.6px">1</div>
<div class="t rv" style="left:2px;top:151.9px">6</div>
<div class="t rv" style="left:2px;top:161.2px">0</div>
<div class="t rv" style="left:2px;top:180.6px">1</div>
<div class="t rv" style="left:2px;top:189.9px">7</div>
<div class="t rv" style="left:2px;top:199.2px">0</div>
<div class="t rv" style="left:2px;top:218.6px">1</div>
<div class="t rv" style="left:2px;top:227.9px">8</div>
<div class="t rv" style="left:2px;top:237.2px">0</div>
<div class="t rv" style="left:2px;top:256.6px">1</div>
<div class="t rv" style="left:2px;top:265.9px">9</div>
<div class="t rv" style="left:2px;top:275.2px">0</div>
<div class="t rv" style="left:2px;top:294.6px">2</div>
<div class="t rv" style="left:2px;top:303.9px">0</div>
<div class="t rv" style="left:2px;top:313.2px">0</div>
<div class="t rv" style="left:2px;top:331.6px">2</div>
<div class="t rv" style="left:2px;top:340.9px">1</div>
<div class="t rv" style="left:2px;top:350.2px">0</div>
<div class="t rv" style="left:2px;top:369.6px">2</div>
<div class="t rv" style="left:2px;top:378.9px">2</div>
<div class="t rv" style="left:2px;top:388.2px">0</div>
<div class="t rv" style="left:2px;top:407.6px">2</div>
<div class="t rv" style="left:2px;top:416.9px">3</div>
<div class="t rv" style="left:2px;top:426.2px">0</div>
<div class="t rv" style="left:2px;top:445.6px">2</div>
<div class="t rv" style="left:2px;top:454.9px">4</div>
<div class="t rv" style="left:2px;top:464.2px">0</div>
<div class="t rv" style="left:2px;top:482.6px">2</div>
<div class="t rv" style="left:2px;top:491.9px">5</div>
<div class="t rv" style="left:2px;top:501.2px">0</div>
<div class="t rv" style="left:2px;top:520.6px">2</div>
<div class="t rv" style="left:2px;top:529.9px">6</div>
<div class="t rv" style="left:2px;top:539.2px">0</div>
<div class="t rv" style="left:2px;top:558.6px">2</div>
<div class="t rv" style="left:2px;top:567.9px">7</div>
<div class="t rv" style="left:2px;top:577.2px">0</div>
</div>
<div class="a" style="left:46px;top:64px;width:16px;height:16px;background:#1f1f1f">
<svg class="a" style="left:0;top:0" width="16" height="16" shape-rendering="crispEdges">
<rect x="15" y="0" width="1" height="16" fill="#a0a0a0"/>
<rect x="0" y="15" width="16" height="1" fill="#a0a0a0"/>
<g fill="#a0a0a0"><rect x="1" y="4" width="1" height="1"/><rect x="4" y="1" width="1" height="1"/><rect x="4" y="3" width="1" height="1"/><rect x="3" y="4" width="1" height="1"/><rect x="5" y="4" width="1" height="1"/><rect x="4" y="5" width="1" height="1"/><rect x="7" y="4" width="1" height="1"/><rect x="9" y="4" width="1" height="1"/><rect x="11" y="4" width="1" height="1"/><rect x="13" y="4" width="1" height="1"/><rect x="4" y="7" width="1" height="1"/><rect x="4" y="9" width="1" height="1"/><rect x="4" y="11" width="1" height="1"/><rect x="4" y="13" width="1" height="1"/></g>
</svg></div>
<div class="a" style="left:45px;top:64px;width:1px;height:580px;background:#3a3a3a"></div>

<div class="a" style="left:62px;top:80px;width:715px;height:547px;background:#ffffff;overflow:hidden">
<div class="a" style="left:55px;top:0;width:1px;height:547px;background:#a5a5ff"></div>
<div class="a" style="left:695px;top:0;width:1px;height:547px;background:#a5a5ff"></div>
<svg class="a" style="left:-62px;top:-80px" width="777" height="627">
<path d="M188 80 L274.4 130.2 C270 165 256 196.5 241.5 196.5 C228 196.5 217 175 212 155.3" fill="none" stroke="#8a8a8a" stroke-width="1"/>
</svg>
<div class="a" style="left:200px;top:183px;width:401px;height:222px;border:1px solid #5a9cf8"></div>
<div class="t" style="left:201px;top:183.6px;font-family:'Liberation Serif',serif;font-size:15.3px;color:#000">www.uzzf.com</div>
</div>

<div class="a" style="left:777px;top:64px;width:15px;height:563px;background:#4b4b4b"></div>
<div class="a" style="left:778px;top:308px;width:13px;height:206px;background:#6a6a6a;border-radius:6px"></div>
<svg class="a" style="left:0;top:0" width="800" height="640">
<path d="M780.6 73 L784.5 69.2 L788.4 73" fill="none" stroke="#8c8c8c" stroke-width="1"/>
<path d="M780.6 617.8 L784.5 621.6 L788.4 617.8" fill="none" stroke="#8c8c8c" stroke-width="1"/>
</svg>
<div class="a" style="left:792px;top:34px;width:1px;height:610px;background:#3c3c3c"></div>

<div class="a" style="left:46px;top:627px;width:746px;height:16px;background:#535353"></div>
<div class="a" style="left:45px;top:643px;width:748px;height:1px;background:#3a3a3a"></div>
<div class="a" style="left:599px;top:627px;width:156px;height:16px;background:#4a4a4a"></div>
<div class="a" style="left:678px;top:628px;width:27px;height:15px;background:#6a6a6a;border-radius:7.5px"></div>
<div class="a" style="left:0;top:647px;width:1052px;height:1px;background:#3a3a3a"></div>
<div class="t" style="left:60.5px;top:630px;font-size:12px;color:#e0e0e0">100%</div>
<div class="a" style="left:162.5px;top:628.5px;width:90px;height:14px;background:#484848;border:1px solid #6b6b6b;border-radius:3px"></div>
<div class="a" style="left:234.5px;top:629px;width:1px;height:13px;background:#6b6b6b"></div>
<div class="t" style="left:166.5px;top:630px;font-size:12px;color:#e0e0e0">1</div>
<div class="t" style="left:342.5px;top:630px;font-size:12px;color:#d8d8d8">[基本]</div>
<div class="t" style="left:385px;top:630px;font-size:12px;color:#d8d8d8">(工作)</div>
<div class="t" style="left:484.5px;top:629.5px;font-size:12px;color:#e0e0e0">无错误</div>
<svg class="a" style="left:0;top:0" width="800" height="648">
<g fill="none" stroke="#d8d8d8" stroke-width="1.2">
<path d="M102.8 633.6 L106.6 637 L110.4 633.6"/>
<path d="M239.8 633.4 L243.6 636.8 L247.4 633.4"/>
<path d="M444.8 633.4 L448.6 636.8 L452.4 633.4"/>
<path d="M586.4 633.6 L590.2 637 L594 633.6"/>
</g>
<g fill="#7c7c7c">
<rect x="122.8" y="632" width="1.8" height="8"/><path d="M131 632 V640 L125 636 Z"/>
<path d="M150.2 632 V640 L144.6 636 Z"/>
<path d="M266.2 632 V640 L271.6 636 Z"/>
<path d="M284.9 632 V640 L290.4 636 Z"/><rect x="291.2" y="632" width="1.8" height="8"/>
</g>
<circle cx="316.4" cy="635.4" r="6.5" fill="#c8c8c8"/>
<path d="M313.2 632.1 H317.4 V636.2 H320.7 V643 H313.2 Z" fill="#535353"/>
<path d="M318.1 633.2 L320.3 635.5 H318.1 Z" fill="#535353"/>
<path d="M324 639 H327.2 L325.6 641.4 Z" fill="#c8c8c8"/>
<circle cx="473.2" cy="635.2" r="5.4" fill="#3fa846"/>
<g fill="none" stroke="#8a8a8a" stroke-width="1">
<path d="M609.2 632.4 L605.8 636 L609.2 639.6"/>
<path d="M744.4 632.4 L747.8 636 L744.4 639.6"/>
</g>
<rect x="760.2" y="630.7" width="14.2" height="10" fill="none" stroke="#c4c4c4" stroke-width="1.5"/>
<rect x="766.6" y="630.7" width="1.5" height="10" fill="#c4c4c4"/>
<g fill="#6e6e6e">
<rect x="789" y="632" width="1" height="1"/><rect x="787" y="634" width="1" height="1"/><rect x="789" y="634" width="1" height="1"/>
<rect x="785" y="636" width="1" height="1"/><rect x="787" y="636" width="1" height="1"/><rect x="789" y="636" width="1" height="1"/>
<rect x="783" y="638" width="1" height="1"/><rect x="785" y="638" width="1" height="1"/><rect x="787" y="638" width="1" height="1"/><rect x="789" y="638" width="1" height="1"/>
<rect x="781" y="640" width="1" height="1"/><rect x="783" y="640" width="1" height="1"/><rect x="785" y="640" width="1" height="1"/><rect x="787" y="640" width="1" height="1"/><rect x="789" y="640" width="1" height="1"/>
</g>
</svg>

<div class="a" style="left:794px;top:34px;width:254px;height:610px;background:#535353;border:1px solid #3c3c3c"></div>
<div class="a" style="left:795px;top:35px;width:252px;height:12px;background:#444444;border-bottom:1px solid #3a3a3a"></div>
<div class="a" style="left:795px;top:47px;width:252px;height:27px;background:#434343"></div>
<div class="a" style="left:795px;top:47px;width:51px;height:28px;background:#535353"></div>
<div class="a" style="left:846px;top:47px;width:1px;height:27px;background:#3a3a3a"></div>
<div class="a" style="left:896px;top:47px;width:1px;height:27px;background:#3a3a3a"></div>
<div class="a" style="left:994px;top:47px;width:1px;height:27px;background:#3a3a3a"></div>
<div class="a" style="left:847px;top:73px;width:200px;height:1px;background:#3a3a3a"></div>
<div class="t" style="left:808px;top:54.5px;font-size:13px;color:#ececec">属性</div>
<div class="t" style="left:859px;top:54.5px;font-size:13px;color:#a6a6a6">页面</div>
<div class="t" style="left:910.5px;top:55px;font-size:13px;color:#a6a6a6">CC Libraries</div>
<div class="t" style="left:805px;top:85.5px;font-size:12px;color:#ececec">未选择对象</div>
<div class="sep" style="left:795px;top:106px;width:252px"></div>
<div class="t" style="left:805px;top:119.5px;font-size:12px;color:#ececec">文档</div>
<div class="fld" style="left:805px;top:141px;width:94px;height:21px"></div>
<div class="t" style="left:810px;top:147px;font-size:12.5px;color:#e6e6e6">A4</div>
<div class="t" style="left:811px;top:179px;font-size:12px;color:#ececec">宽</div>
<div class="t" style="left:811px;top:204px;font-size:12px;color:#ececec">高</div>
<div class="fld" style="left:825px;top:174px;width:74px;height:21px"></div>
<div class="fld" style="left:825px;top:200px;width:74px;height:21px"></div>
<div class="t" style="left:848px;top:180px;font-size:12.5px;color:#ececec">210<span style="font-size:11.5px;margin-left:3.6px">毫米</span></div>
<div class="t" style="left:848px;top:206px;font-size:12.5px;color:#ececec">297<span style="font-size:11.5px;margin-left:3.6px">毫米</span></div>
<div class="fld" style="left:950px;top:174px;width:69px;height:21px"></div>
<div class="t" style="left:955.5px;top:179px;font-size:12.5px;color:#e6e6e6">1</div>
<div class="t" style="left:945px;top:206px;font-size:12px;color:#ececec">对页</div>
<div class="t" style="left:805px;top:232.5px;font-size:12px;color:#ececec">边距</div>
<div class="fld" style="left:825px;top:253px;width:74px;height:21px"></div>
<div class="fld" style="left:825px;top:279px;width:74px;height:21px"></div>
<div class="fld" style="left:952px;top:253px;width:73px;height:21px"></div>
<div class="fld" style="left:952px;top:279px;width:73px;height:21px"></div>
<div class="a" style="left:848px;top:256px;width:48px;height:15px;overflow:hidden"><div class="t" style="left:0;top:2.5px;font-size:12.5px;color:#ececec">20<span style="font-size:11.5px;margin-left:3.6px">毫米</span></div></div>
<div class="a" style="left:848px;top:282px;width:48px;height:15px;overflow:hidden"><div class="t" style="left:0;top:2.5px;font-size:12.5px;color:#ececec">20.883<span style="font-size:11.5px;margin-left:3.6px">毫米</span></div></div>
<div class="a" style="left:975px;top:256px;width:48px;height:15px;overflow:hidden"><div class="t" style="left:0;top:2.5px;font-size:12.5px;color:#ececec">20.667<span style="font-size:11.5px;margin-left:3.6px">毫米</span></div></div>
<div class="a" style="left:975px;top:282px;width:48px;height:15px;overflow:hidden"><div class="t" style="left:0;top:2.5px;font-size:12.5px;color:#ececec">20<span style="font-size:11.5px;margin-left:3.6px">毫米</span></div></div>
<div class="t" style="left:805px;top:321px;font-size:12px;color:#ececec">方向:</div>
<div class="fld" style="left:905px;top:315px;width:120px;height:20px"></div>
<div class="t" style="left:909.5px;top:319.5px;font-size:12px;color:#e6e6e6">水平</div>
<div class="btn" style="left:805px;top:345px;width:220px;height:20px;line-height:20px">调整版面</div>
<div class="sep" style="left:795px;top:371px;width:252px"></div>
<div class="t" style="left:805px;top:384px;font-size:12px;color:#ececec">页面</div>
<div class="fld" style="left:805px;top:404px;width:94px;height:21px"></div>
<div class="a" style="left:880.5px;top:405px;width:1px;height:19px;background:#6b6b6b"></div>
<div class="t" style="left:810px;top:409px;font-size:12.5px;color:#e6e6e6">1</div>
<div class="btn" style="left:805px;top:433px;width:220px;height:21px;line-height:21px">编辑页面</div>
<div class="sep" style="left:795px;top:460px;width:252px"></div>
<div class="t" style="left:805px;top:477px;font-size:12px;color:#ececec">标尺和网格</div>
<div class="sep" style="left:795px;top:500px;width:252px"></div>
<div class="t" style="left:805px;top:517.5px;font-size:12px;color:#ececec">参考线</div>
<div class="sep" style="left:795px;top:540px;width:252px"></div>
<div class="t" style="left:805px;top:548px;font-size:12px;color:#ececec">快速操作</div>
<div class="btn" style="left:805px;top:568px;width:105px;height:21px;line-height:21px;text-indent:-2px">导入文件</div>
<div class="btn" style="left:920px;top:568px;width:105px;height:21px;line-height:21px;text-indent:-3px">版面网格选项</div>

<svg class="a" style="left:0;top:0" width="1052" height="648">
<path d="M1034.8 38.6 L1037.8 40.8 L1034.8 43 Z M1038.8 38.6 L1041.8 40.8 L1038.8 43 Z" fill="#cfcfcf"/>
<path d="M886 150 L889.6 153.6 L893.2 150" fill="none" stroke="#d8d8d8" stroke-width="1.2"/>
<path d="M1012 322 L1015.6 325.6 L1019.2 322" fill="none" stroke="#d8d8d8" stroke-width="1.2"/>
<path d="M886 412 L889.6 415.6 L893.2 412" fill="none" stroke="#d8d8d8" stroke-width="1.2"/>
<rect x="843" y="175" width="1" height="19" fill="#6b6b6b"/>
<rect x="826" y="175" width="17" height="19" fill="#4b4b4b" rx="2"/>
<path d="M830.7 181.5 L834.5 178.0 L838.3 181.5 M830.7 187.5 L834.5 191.0 L838.3 187.5" fill="none" stroke="#c8c8c8" stroke-width="1.1"/>
<rect x="843" y="201" width="1" height="19" fill="#6b6b6b"/>
<rect x="826" y="201" width="17" height="19" fill="#4b4b4b" rx="2"/>
<path d="M830.7 207.5 L834.5 204.0 L838.3 207.5 M830.7 213.5 L834.5 217.0 L838.3 213.5" fill="none" stroke="#c8c8c8" stroke-width="1.1"/>
<rect x="843" y="254" width="1" height="19" fill="#6b6b6b"/>
<rect x="826" y="254" width="17" height="19" fill="#4b4b4b" rx="2"/>
<path d="M830.7 260.5 L834.5 257.0 L838.3 260.5 M830.7 266.5 L834.5 270.0 L838.3 266.5" fill="none" stroke="#c8c8c8" stroke-width="1.1"/>
<rect x="843" y="280" width="1" height="19" fill="#6b6b6b"/>
<rect x="826" y="280" width="17" height="19" fill="#4b4b4b" rx="2"/>
<path d="M830.7 286.5 L834.5 283.0 L838.3 286.5 M830.7 292.5 L834.5 296.0 L838.3 292.5" fill="none" stroke="#c8c8c8" stroke-width="1.1"/>
<rect x="970" y="254" width="1" height="19" fill="#6b6b6b"/>
<rect x="953" y="254" width="17" height="19" fill="#4b4b4b" rx="2"/>
<path d="M957.7 260.5 L961.5 257.0 L965.3 260.5 M957.7 266.5 L961.5 270.0 L965.3 266.5" fill="none" stroke="#c8c8c8" stroke-width="1.1"/>
<rect x="970" y="280" width="1" height="19" fill="#6b6b6b"/>
<rect x="953" y="280" width="17" height="19" fill="#4b4b4b" rx="2"/>
<path d="M957.7 286.5 L961.5 283.0 L965.3 286.5 M957.7 292.5 L961.5 296.0 L965.3 292.5" fill="none" stroke="#c8c8c8" stroke-width="1.1"/>
<rect x="926" y="141" width="22" height="22" rx="3" fill="#333333"/>
<rect x="976" y="141" width="22" height="22" rx="3" fill="#333333"/>
<rect x="934.5" y="144.6" width="9" height="13" fill="none" stroke="#c8c8c8" stroke-width="1"/>
<path d="M931 144.2 H941 V159.8 L931 158.2 Z" fill="#c8c8c8"/>
<path d="M933.4 154.5 L936 146.6 L938.6 154.5 M934.2 152.2 H937.8" fill="none" stroke="#333" stroke-width="0.9"/>
<rect x="955.5" y="144.6" width="9" height="13" fill="none" stroke="#c8c8c8" stroke-width="1"/>
<path d="M957.8 144.2 H968 V158.2 L957.8 159.8 Z" fill="#c8c8c8"/>
<path d="M963 146.5 V156.5 M960.2 149 H965.8 M960.8 152.5 L963 150.2 L965.2 152.5 M961.5 155 L963 153.5 L964.5 155" fill="none" stroke="#444" stroke-width="0.9"/>
<rect x="980.5" y="144.8" width="13" height="14.4" fill="none" stroke="#c8c8c8" stroke-width="1.5"/>
<circle cx="987" cy="147.9" r="2" fill="#c8c8c8"/><path d="M983.6 159 V152.6 Q983.6 151 985.2 151 H988.8 Q990.4 151 990.4 152.6 V159 Z" fill="#c8c8c8"/>
<rect x="1005.5" y="144.8" width="12" height="14.4" fill="none" stroke="#c8c8c8" stroke-width="1.4"/>
<circle cx="1009" cy="152" r="2" fill="#c8c8c8"/><rect x="1012.6" y="147.8" width="5" height="8.4" fill="#c8c8c8"/>
<path d="M928 184 H933 V178.8 H935.5 V192.2 H928 Z M928 182.6 L931.6 179 V182.6 Z M937.5 178.8 H940 V184 H945 V192.2 H937.5 Z M941.4 179 L945 182.6 H941.4 Z" fill="#c8c8c8"/>
<rect x="936" y="175.8" width="1" height="19.4" fill="#c8c8c8"/>
<rect x="926" y="205" width="12" height="12" rx="2" fill="#c4c4c4"/>
<path d="M928.8 211.2 L931 213.6 L935.4 208.2" fill="none" stroke="#3a3a3a" stroke-width="1.5"/>
<rect x="806" y="254.6" width="16.2" height="4.6" fill="#c8c8c8"/><rect x="806.6" y="263" width="15" height="8" fill="none" stroke="#c8c8c8" stroke-width="1.2"/>
<rect x="806.6" y="281.4" width="15" height="8" fill="none" stroke="#c8c8c8" stroke-width="1.2"/><rect x="806" y="292.3" width="16.2" height="4.6" fill="#c8c8c8"/>
<rect x="932.6" y="257.4" width="8.2" height="10.6" fill="none" stroke="#c8c8c8" stroke-width="1.2"/><rect x="943" y="256.2" width="3.6" height="13" fill="#c8c8c8"/><rect x="947" y="255" width="1.2" height="16" fill="#c8c8c8"/>
<rect x="932" y="281.2" width="1.2" height="16" fill="#c8c8c8"/><rect x="933.6" y="282.4" width="3.6" height="13" fill="#c8c8c8"/><rect x="939.6" y="283.6" width="8.2" height="10.6" fill="none" stroke="#c8c8c8" stroke-width="1.2"/>
<rect x="912.9" y="268.9" width="4.6" height="12.4" rx="2.3" fill="none" stroke="#c4c4c4" stroke-width="1.6"/>
<path d="M908.6 269.3 L920.6 280.5" stroke="#535353" stroke-width="3"/>
<path d="M908.6 269.3 L920.6 280.5" stroke="#c4c4c4" stroke-width="1.5" stroke-linecap="round"/>
<rect x="978.2" y="411.7" width="10.6" height="10.2" fill="none" stroke="#c8c8c8" stroke-width="1.1"/><path d="M983.5 414 V419.6 M980.7 416.8 H986.3" stroke="#c8c8c8" stroke-width="1.1"/>
<g fill="none" stroke="#7a7a7a" stroke-width="1.1"><path d="M1005 412.6 H1016"/><path d="M1008.3 412.4 V410.8 H1012.7 V412.4"/><path d="M1006.3 413 V422 H1014.7 V413"/><path d="M1008.8 414.8 V420.4 M1010.5 414.8 V420.4 M1012.2 414.8 V420.4"/></g>
<rect x="926" y="471" width="22" height="22" rx="3" fill="#333333"/>
<path d="M928.7 473.9 H945.2 V477.9 H932.9 V489.7 H928.7 Z" fill="#c8c8c8"/>
<g fill="#333"><rect x="934.3" y="475.3" width="1.1" height="1.1"/><rect x="937.1" y="475.3" width="1.1" height="1.1"/><rect x="939.9" y="475.3" width="1.1" height="1.1"/><rect x="942.7" y="475.3" width="1.1" height="1.1"/><rect x="930.2" y="479.4" width="1.1" height="1.1"/><rect x="930.2" y="482.2" width="1.1" height="1.1"/><rect x="930.2" y="485" width="1.1" height="1.1"/><rect x="930.2" y="487.8" width="1.1" height="1.1"/></g>
<g fill="none" stroke="#c8c8c8" stroke-width="1.2"><rect x="954.4" y="474.4" width="15.2" height="15.2"/><path d="M954.4 477.9 H969.6 M954.4 481 H969.6 M954.4 484.2 H969.6 M954.4 487.3 H969.6 M957.8 477.9 V487.3 M966.2 477.9 V487.3"/></g>
<g fill="none" stroke="#c8c8c8" stroke-width="1.3"><rect x="979.4" y="474.4" width="15.2" height="15.2"/><path d="M984.5 474.4 V489.6 M989.5 474.4 V489.6 M979.4 479.5 H994.6 M979.4 484.5 H994.6"/></g>
<rect x="1005.4" y="474.4" width="3.4" height="15.2" fill="none" stroke="#c8c8c8" stroke-width="1.2"/>
<rect x="1005.4" y="477.6" width="3.4" height="1" fill="#c8c8c8"/>
<rect x="1005.4" y="480.8" width="3.4" height="1" fill="#c8c8c8"/>
<rect x="1005.4" y="484" width="3.4" height="1" fill="#c8c8c8"/>
<rect x="1005.4" y="487.2" width="3.4" height="1" fill="#c8c8c8"/>
<rect x="1011.6" y="474.4" width="3.4" height="15.2" fill="none" stroke="#c8c8c8" stroke-width="1.2"/>
<rect x="1011.6" y="477.6" width="3.4" height="1" fill="#c8c8c8"/>
<rect x="1011.6" y="480.8" width="3.4" height="1" fill="#c8c8c8"/>
<rect x="1011.6" y="484" width="3.4" height="1" fill="#c8c8c8"/>
<rect x="1011.6" y="487.2" width="3.4" height="1" fill="#c8c8c8"/>
<rect x="1017.8" y="474.4" width="3.4" height="15.2" fill="none" stroke="#c8c8c8" stroke-width="1.2"/>
<rect x="1017.8" y="477.6" width="3.4" height="1" fill="#c8c8c8"/>
<rect x="1017.8" y="480.8" width="3.4" height="1" fill="#c8c8c8"/>
<rect x="1017.8" y="484" width="3.4" height="1" fill="#c8c8c8"/>
<rect x="1017.8" y="487.2" width="3.4" height="1" fill="#c8c8c8"/>
<rect x="926" y="511" width="22" height="22" rx="3" fill="#333333"/>
<rect x="964" y="511" width="22" height="22" rx="3" fill="#333333"/>
<rect x="1002" y="511" width="22" height="22" rx="3" fill="#333333"/>
<g stroke="#c8c8c8" stroke-width="1.2"><path d="M932.4 514 V530 M935.3 514 V530 M929 519.4 H945 M929 526.3 H945"/><path d="M970.4 514 V530 M973.4 514 V530 M967 519.4 H983 M967 526.3 H975.5"/><path d="M1008.5 514 V530 M1004.5 519.4 H1021 M1009.6 519.4 L1013.2 516.2 M1009.6 519.4 L1013.2 522.6"/></g>
<rect x="976.9" y="526" width="7.2" height="4.8" fill="#c8c8c8"/><path d="M978.5 526 V524.2 Q978.5 521.8 980.7 521.8 Q982.9 521.8 982.9 524" fill="none" stroke="#c8c8c8" stroke-width="1.1"/>
<path d="M1019.8 522.2 L1016.2 527.2 H1018.6 L1016.6 531 L1021.8 525.6 H1019.2 L1021 522.2 Z" fill="#c8c8c8"/>
</svg>
</body></html>
